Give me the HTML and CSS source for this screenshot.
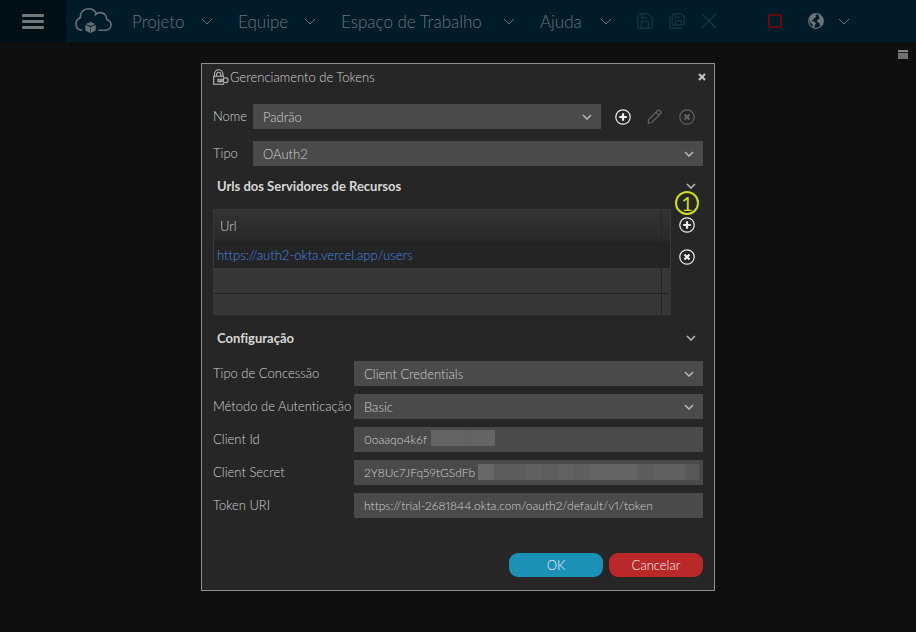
FILE: index.html
```html
<!DOCTYPE html>
<html lang="pt-BR">
<head>
  <meta charset="UTF-8">
  <title>Gerenciamento de Tokens</title>
  <meta name="viewport" content="width=device-width, initial-scale=1.0">
  <link rel="stylesheet" href="styles.css">
</head>
<body>

<header class="topbar">
  <button class="hamburger" aria-label="Menu"><span></span><span></span><span></span></button>
  <svg class="logo" width="38" height="28" viewBox="0 0 38 28" fill="none" stroke="#667176" stroke-width="1.600" stroke-linecap="round">
    <path d="M6.500 23.200C3 22.600 1 20 1 17c0-3 1.600-5 4.200-6.200C5 5.500 8.700 1.800 13.500 1.800c3.700 0 6.500 1.900 7.800 5 1.300-.9 2.500-1.200 4-1.200 3.800 0 6.600 3 6.400 6.800 3 1.100 4.300 3.100 4.300 5.400 0 3.200-2.400 5.400-5.400 5.400H24"/>
    <path d="M21.300 6.800c-.5.400-.8.700-1.100 1.100"/>
    <g fill="#667176" stroke="none">
      <path d="M15.500 15l4.700 2-4.700 2.100L10.800 17z"/>
      <path d="M10.300 17.700l4.900 2.200v6.100l-4.900-2.500zM20.700 17.700l-4.900 2.200v6.100l4.900-2.500z"/>
    </g>
  </svg>
  <nav class="menu">
    <button>Projeto<svg class="caret" width="12" height="7" viewBox="0 0 12 7"><path d="M1 1l5 5 5-5"/></svg></button>
    <button>Equipe<svg class="caret" width="12" height="7" viewBox="0 0 12 7"><path d="M1 1l5 5 5-5"/></svg></button>
    <button>Espaço de Trabalho<svg class="caret" width="12" height="7" viewBox="0 0 12 7"><path d="M1 1l5 5 5-5"/></svg></button>
    <button>Ajuda<svg class="caret" width="12" height="7" viewBox="0 0 12 7"><path d="M1 1l5 5 5-5"/></svg></button>
  </nav>
  <div class="tools">
    <button aria-label="Salvar"><svg width="16" height="16" viewBox="0 0 16 16"><path d="M2.500.8h8.700l4 4v8.700a1.700 1.700 0 0 1-1.700 1.700h-11A1.700 1.700 0 0 1 .8 13.500v-11A1.700 1.700 0 0 1 2.500.8zM4.500 15V8.500h7V15M4.500 1v4H10"/></svg></button>
    <button aria-label="Salvar tudo"><svg width="16" height="16" viewBox="0 0 16 16"><path d="M4.700.8h7.400l3.100 3.100v6.900a1.300 1.300 0 0 1-1.300 1.300H4.700a1.300 1.300 0 0 1-1.300-1.300V2.100A1.300 1.300 0 0 1 4.700.8zM6.500 12V7.500h5.700V12M6.500 1v3.200H11M.8 3.500v9.700a2 2 0 0 0 2 2h10"/></svg></button>
    <button aria-label="Fechar"><svg width="16" height="16" viewBox="0 0 16 16"><path d="M1 1l14 14M15 1L1 15"/></svg></button>
  </div>
  <div class="status">
    <button aria-label="Parar"><svg width="14" height="14" viewBox="0 0 14 14"><rect x="1" y="1" width="12" height="12" rx="1" fill="none" stroke="#650b10" stroke-width="2"/></svg></button>
    <button class="language" aria-label="Idioma">
      <svg width="16" height="16" viewBox="0 0 16 16"><circle cx="8" cy="8" r="7.300" fill="none" stroke="#6b7478" stroke-width="1.200"/><path fill="#6b7478" d="M1 5.500L3 2.500 6 .8 8.500 1 7.500 2.500 8.300 3.500 7 4.800 5.800 5.300 5.300 6.800 3.800 7 4.500 8.300 6.500 8.800 8 10.300 7 12 6.300 14.500 5 14 4.500 11.500 3 10 1.800 8zM10.500 1.500L13 3l2 3v4l-1.500 2.500L12 13l-.5-3-2-.8L9 7.500 10.500 6l1.500-.5-1-1z"/></svg>
      <svg class="caret" width="12" height="7" viewBox="0 0 12 7"><path d="M1 1l5 5 5-5"/></svg>
    </button>
  </div>
</header>

<main class="workspace">
  <button class="restore" aria-label="Restaurar"></button>

  <section class="dialog" role="dialog" aria-labelledby="dialog-title">
    <div class="titlebar">
      <svg width="16" height="17" viewBox="0 0 16 17" fill="none" stroke="#bdbdbd" stroke-width="1.100">
        <path d="M1.500 7V5a4.200 4.200 0 0 1 8.400 0v2M3.700 7V5.200a2 2 0 0 1 4 0V7"/>
        <path d="M10.500 8.500V7.200H.7v8.100h9.800v-1"/>
        <circle cx="12.600" cy="11.300" r="2.500"/>
        <path d="M10.200 10.200H5v2.500h1.500v-1h1.200v1h1.200v-1h1.300"/>
      </svg>
      <h1 id="dialog-title">Gerenciamento de Tokens</h1>
      <button class="close" aria-label="Fechar"><svg width="8" height="8" viewBox="0 0 8 8"><path d="M1 1l6 6M7 1L1 7" stroke="#c4c4c4" stroke-width="2"/></svg></button>
    </div>

    <div class="top-row">
      <label for="nome">Nome</label>
      <select id="nome"><option>Padrão</option></select>
      <div class="row-actions">
        <button aria-label="Adicionar token"><svg width="16" height="16" viewBox="0 0 16 16"><circle cx="8" cy="8" r="7.200"/><path d="M8 4.200v7.600M4.200 8h7.600"/></svg></button>
        <button class="pencil" aria-label="Editar token" disabled><svg width="16" height="16" viewBox="0 0 16 16"><path d="M1.200 14.300l.5-3.800 9-9a1.400 1.400 0 0 1 2 0l1 1a1.400 1.400 0 0 1 0 2l-9 9zM9 3.200l3 3"/></svg></button>
        <button aria-label="Remover token" disabled><svg width="16" height="16" viewBox="0 0 16 16"><circle cx="8" cy="8" r="7.200"/><path d="M5.500 5.500l5 5M10.500 5.500l-5 5"/></svg></button>
      </div>
    </div>
    <div class="top-row">
      <label for="tipo">Tipo</label>
      <select id="tipo"><option>OAuth2</option></select>
    </div>

    <button class="section-title">Urls dos Servidores de Recursos<svg width="10" height="6" viewBox="0 0 10 6"><path d="M1 1l4 4 4-4"/></svg></button>
    <div class="urls">
      <table>
        <thead>
          <tr><th>Url</th><th class="narrow"></th></tr>
        </thead>
        <tbody>
          <tr class="selected"><td colspan="2"><a href="#">https://auth2-okta.vercel.app/users</a></td></tr>
          <tr class="blank"><td></td><td></td></tr>
          <tr class="blank last"><td></td><td></td></tr>
        </tbody>
      </table>
      <div class="url-actions">
        <span class="step">1</span>
        <button aria-label="Adicionar url"><svg width="16" height="16" viewBox="0 0 16 16"><circle cx="8" cy="8" r="7.200"/><path d="M8 4.200v7.600M4.200 8h7.600"/></svg></button>
        <button aria-label="Remover url"><svg width="16" height="16" viewBox="0 0 16 16"><circle cx="8" cy="8" r="7.200"/><path d="M5.500 5.500l5 5M10.500 5.500l-5 5"/></svg></button>
      </div>
    </div>

    <button class="section-title">Configuração<svg width="10" height="6" viewBox="0 0 10 6"><path d="M1 1l4 4 4-4"/></svg></button>
    <div class="config">
      <label for="concessao">Tipo de Concessão</label>
      <select id="concessao"><option>Client Credentials</option></select>
      <label for="metodo">Método de Autenticação</label>
      <select id="metodo"><option>Basic</option></select>
      <label for="client-id">Client Id</label>
      <div class="field"><input class="id-input" type="text" id="client-id" value="0oaaqo4k6f"><span class="mask mask-id"></span></div>
      <label for="client-secret">Client Secret</label>
      <div class="field"><input class="secret-input" type="text" id="client-secret" value="2Y8Uc7JFq59tGSdFb"><span class="mask mask-secret"></span></div>
      <label for="token-uri">Token URI</label>
      <div class="field"><input type="text" id="token-uri" value="https://trial-2681844.okta.com/oauth2/default/v1/token"></div>
    </div>

    <div class="buttons">
      <button class="ok">OK</button>
      <button class="cancel">Cancelar</button>
    </div>
  </section>
</main>

</body>
</html>
```

FILE: styles.css
```css
* { box-sizing: border-box; }
body { margin: 0; min-height: 100vh; background: #0f0f0f; color: #d0d0d0; font-family: Lato, "Liberation Sans", sans-serif; font-size: 13px; font-weight: 300; font-variant-ligatures: none; }
button, input, select { font: inherit; color: inherit; border: 0; margin: 0; padding: 0; background: none; }
svg { display: block; flex: none; }

/* top bar */
.topbar { display: flex; align-items: center; height: 42px; background: #001c29; color: #6b7478; }
.hamburger { display: flex; flex-direction: column; align-items: center; justify-content: center; gap: 3px; width: 66px; height: 42px; background: #000f16; }
.hamburger span { width: 22px; height: 3px; background: #727779; border-radius: 1px; }
.logo { margin: 0 19px 0 9px; }
.menu { display: grid; grid-template-columns: 106px 103px 199px 97px; font-size: 17px; }
.menu button { display: flex; align-items: center; justify-content: space-between; padding-right: 25px; white-space: nowrap; }
.caret { fill: none; stroke: #667176; stroke-width: 1; }
.tools { display: flex; gap: 16px; }
.tools svg { fill: none; stroke: #19313c; stroke-width: 1.5; }
.status { display: flex; align-items: center; gap: 26px; margin-left: auto; padding-right: 66px; }
.language { display: flex; align-items: center; gap: 14px; }

/* dialog */
.workspace { position: relative; padding: 21px 16px; }
.restore { position: absolute; top: 8px; right: 8px; width: 10px; height: 9px; background: #707070; border-top: 2px solid #858585; box-shadow: inset 0 1px #222; }
.dialog { max-width: 514px; margin: 0 auto; padding: 0 11px 13px; background: #262626; border: 1px solid #8e8e8e; }
.titlebar { display: flex; align-items: center; height: 26px; margin-bottom: 14px; }
.titlebar h1 { flex: 1; margin: 0 0 0 1px; font-size: 13px; font-weight: 300; }
.close { padding: 4px 0 4px 4px; margin-right: -3px; }
.top-row { display: flex; align-items: center; margin-bottom: 12px; }
.top-row label { width: 40px; padding-bottom: 2px; }
select, .field { flex: 1; min-width: 0; width: 100%; height: 25px; padding: 0 10px; background: #4a4a4a; border-radius: 0; }
select { appearance: none; background: #4a4a4a url("data:image/svg+xml,%3Csvg xmlns='http://www.w3.org/2000/svg' width='10' height='6'%3E%3Cpath d='M1 1l4 4 4-4' fill='none' stroke='%23b4b4b4' stroke-width='1.6'/%3E%3C/svg%3E") no-repeat right 9px center; }
.row-actions { display: flex; gap: 16px; padding: 0 8px 0 14px; }
.row-actions svg, .url-actions svg { fill: none; stroke: #f0f0f0; stroke-width: 1.2; }
.row-actions path, .url-actions path { stroke-width: 2.2; }
.row-actions button:disabled svg { stroke: #626262; }
.row-actions .pencil path { stroke-width: 1.2; }

.section-title { display: flex; align-items: center; justify-content: space-between; width: 100%; height: 16px; padding: 0 7px 0 4px; font-weight: 700; color: #d8d8d8; }
.section-title svg { fill: none; stroke: #b4b4b4; stroke-width: 1.6; }

.urls { display: flex; gap: 8px; margin: 15px 0; }
table { flex: 1; border-collapse: separate; border-spacing: 0; table-layout: fixed; border: 1px solid #383838; }
th, td { padding: 0; text-align: left; font-weight: 300; }
th { height: 31px; padding-left: 6px; background: linear-gradient(#333, #292929); }
.narrow { width: 9px; padding: 0; border-left: 1px solid #262626; }
.selected td { height: 27px; padding-left: 3px; background: #242424; }
.selected a { color: #4a86e6; text-decoration: none; }
.blank td { height: 26px; background: #373737; border-bottom: 1px solid #242424; }
.blank td + td { border-left: 1px solid #242424; }
.last td { height: 20px; border-bottom: 0; }
.url-actions { position: relative; display: flex; flex-direction: column; gap: 16px; width: 24px; padding: 8px 0 0; }
.step { position: absolute; top: -18px; left: -4px; width: 24px; height: 24px; border: 2px solid #cfdd12; border-radius: 50%; color: #cfdd12; font-size: 20px; font-weight: 400; line-height: 20px; text-align: center; }

.config { display: grid; grid-template-columns: 141px 1fr; align-items: center; row-gap: 8px; margin-top: 15px; }
.config label { padding-bottom: 2px; white-space: nowrap; }
.field { display: flex; }
.field input { flex: 1; min-width: 0; height: 25px; outline: 0; font-size: 12px; font-variant-numeric: proportional-nums; }
.field .id-input { flex: none; width: 67px; }
.field .secret-input { flex: none; width: 114px; }
.mask { height: 16px; margin-top: 4px; }
.mask-id { width: 64px; margin-top: 3px; background: linear-gradient(90deg, #646462 16px, #636464 16px 32px, #606264 32px 40px, #656565 40px); }
.mask-secret { flex: 1; margin-right: -6px; background: linear-gradient(90deg, #686868 16px, #5c5c5c 16px 48px, #616161 48px 64px, #5d5e5e 64px 80px, #626262 80px 96px, #5f5f5f 96px 112px, #646464 112px 160px, #5d5d5d 160px 176px, #5f6060 176px 208px, #57595b 208px); }

.buttons { display: flex; justify-content: flex-end; gap: 6px; margin-top: 35px; }
.buttons button { width: 94px; height: 24px; border-radius: 9px; color: #f0f0f0; }
.ok { background: #1b91b8; }
.cancel { background: #b92929; }
```
